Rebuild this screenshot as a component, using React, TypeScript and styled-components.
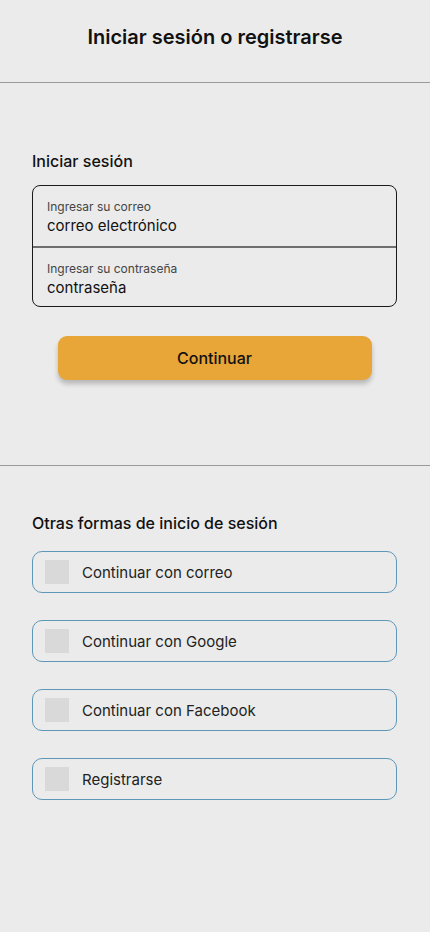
import styled, { createGlobalStyle } from 'styled-components'

const GlobalStyle = createGlobalStyle`
  * {
    box-sizing: border-box;
  }

  body {
    margin: 0;
    background: #ebebeb;
    font-family: Inter, 'Noto Sans', sans-serif;
    color: #111;
  }
`

const Page = styled.div`
  min-height: 932px;
  background: #ebebeb;
`

const Header = styled.header`
  height: 83px;
  display: flex;
  align-items: center;
  justify-content: center;
  padding-bottom: 8px;
  border-bottom: 1px solid #9a9a9a;
`

const Title = styled.h1`
  margin: 0;
  font-size: 20px;
  font-weight: 600;
`

const Section = styled.section<{ $top: number; $bottom: number; $bordered?: boolean }>`
  padding: ${({ $top }) => $top}px 33px ${({ $bottom }) => $bottom}px 32px;
  border-bottom: ${({ $bordered }) => ($bordered ? '1px solid #9a9a9a' : 'none')};
`

const SectionTitle = styled.h2`
  margin: 0 0 14px;
  font-size: 16px;
  line-height: 19px;
  font-weight: 500;
`

const FieldBox = styled.div`
  border: 1px solid #1a1a1a;
  border-radius: 8px;
  overflow: hidden;
`

const Field = styled.div<{ $divided?: boolean }>`
  height: 60px;
  padding: 13px 14px 0;
  border-top: ${({ $divided }) => ($divided ? '2px solid #6e6e6e' : 'none')};
  display: flex;
  flex-direction: column;
  gap: 3px;
`

const FieldLabel = styled.span`
  font-size: 12px;
  line-height: 15px;
  color: #444;
`

const FieldValue = styled.span`
  font-size: 15px;
  line-height: 18px;
  color: #111;
`

const ButtonRow = styled.div`
  display: flex;
  justify-content: center;
  margin-top: 29px;
`

const PrimaryButton = styled.button`
  width: 314px;
  height: 44px;
  border: none;
  border-radius: 9px;
  background: #e8a538;
  box-shadow: 0 4px 5px rgba(0, 0, 0, 0.22);
  font-family: inherit;
  font-size: 16px;
  font-weight: 500;
  color: #111;
`

const OptionList = styled.div`
  display: flex;
  flex-direction: column;
  gap: 27px;
  margin-top: 18px;
`

const OptionButton = styled.button`
  height: 42px;
  width: 100%;
  display: flex;
  align-items: center;
  gap: 13px;
  padding: 0 12px;
  background: transparent;
  border: 1px solid #5f97b8;
  border-radius: 10px;
  font-family: inherit;
  font-size: 15px;
  color: #222;
  text-align: left;
`

const OptionIcon = styled.span`
  width: 24px;
  height: 24px;
  background: #d9d9d9;
  flex-shrink: 0;
`

const options = [
  'Continuar con correo',
  'Continuar con Google',
  'Continuar con Facebook',
  'Registrarse',
]

const App = () => {
  return (
    <>
      <GlobalStyle />
      <Page>
        <Header>
          <Title>Iniciar sesión o registrarse</Title>
        </Header>

        <Section $top={69} $bottom={85} $bordered>
          <SectionTitle>Iniciar sesión</SectionTitle>
          <FieldBox>
            <Field>
              <FieldLabel>Ingresar su correo</FieldLabel>
              <FieldValue>correo electrónico</FieldValue>
            </Field>
            <Field $divided>
              <FieldLabel>Ingresar su contraseña</FieldLabel>
              <FieldValue>contraseña</FieldValue>
            </Field>
          </FieldBox>
          <ButtonRow>
            <PrimaryButton>Continuar</PrimaryButton>
          </ButtonRow>
        </Section>

        <Section $top={48} $bottom={40}>
          <SectionTitle>Otras formas de inicio de sesión</SectionTitle>
          <OptionList>
            {options.map((label) => (
              <OptionButton key={label}>
                <OptionIcon />
                {label}
              </OptionButton>
            ))}
          </OptionList>
        </Section>
      </Page>
    </>
  )
}

export default App
